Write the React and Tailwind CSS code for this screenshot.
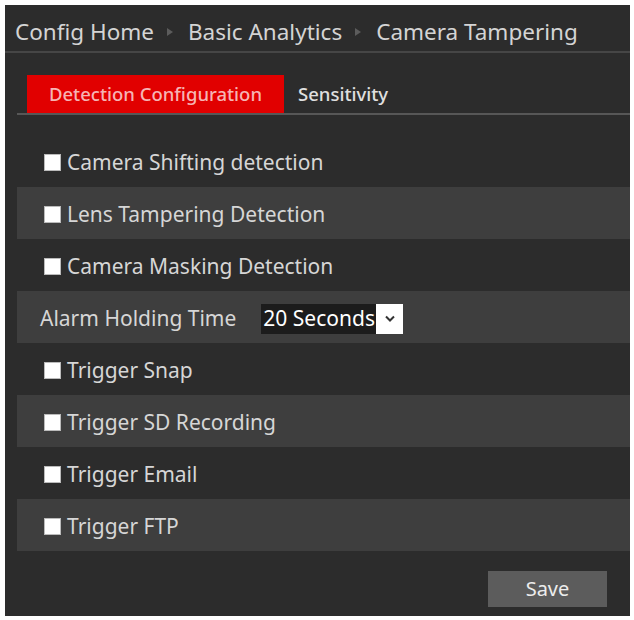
import React, { useState } from "react";

const options = [
  { id: "shift", label: "Camera Shifting detection" },
  { id: "lens", label: "Lens Tampering Detection" },
  { id: "mask", label: "Camera Masking Detection" },
  { id: "alarm", label: "Alarm Holding Time", select: true },
  { id: "snap", label: "Trigger Snap" },
  { id: "sd", label: "Trigger SD Recording" },
  { id: "email", label: "Trigger Email" },
  { id: "ftp", label: "Trigger FTP" },
];

const Arrow = () => (
  <svg width="8" height="10" viewBox="0 0 8 10" className="ml-[12px] mr-[14px]">
    <path d="M1 1 L7 5 L1 9 Z" fill="#5c5c5c" />
  </svg>
);

const App = () => {
  const [tab, setTab] = useState("detection");
  const [checked, setChecked] = useState({});
  const [holding, setHolding] = useState("20");

  const toggle = (id) => setChecked((c) => ({ ...c, [id]: !c[id] }));

  return (
    <div
      className="min-h-screen bg-white pt-[5px] pl-[5px] pr-[4px]"
      style={{ fontFamily: '"Noto Sans", "Open Sans", sans-serif' }}
    >
      <div className="bg-[#2c2c2c] h-[611px] flex flex-col">
        {/* Breadcrumb */}
        <div className="h-[48px] border-b-2 border-[#464646] flex items-center pl-[10px] pt-[8px] text-[22.5px] text-[#d4d4d4]">
          <span>Config Home</span>
          <Arrow />
          <span>Basic Analytics</span>
          <Arrow />
          <span>Camera Tampering</span>
        </div>

        {/* Tabs */}
        <div className="mt-[22px] ml-[12px] border-b-2 border-[#575757] flex pl-[10px] text-[18.5px] font-medium">
          <button
            onClick={() => setTab("detection")}
            className={`h-[38px] w-[257px] ${
              tab === "detection" ? "bg-[#e10000] text-[#f6b4b4]" : "text-[#e0e0e0]"
            }`}
          >
            Detection Configuration
          </button>
          <button
            onClick={() => setTab("sensitivity")}
            className={`h-[38px] px-[14px] ${
              tab === "sensitivity" ? "bg-[#e10000] text-[#f6b4b4]" : "text-[#e0e0e0]"
            }`}
          >
            Sensitivity
          </button>
        </div>

        {/* Options */}
        <div className="mt-[20px] ml-[12px] text-[21px] text-[#d6d6d6]">
          {options.map((opt, i) => (
            <div
              key={opt.id}
              className={`h-[52px] flex items-center pt-[3px] ${i % 2 === 1 ? "bg-[#3e3e3e]" : ""} ${
                opt.select ? "pl-[23px]" : "pl-[27px]"
              }`}
            >
              {opt.select ? (
                <>
                  <span>{opt.label}</span>
                  <div className="ml-[25px] flex items-stretch h-[30px]">
                    <div className="bg-[#1c1c1c] text-white flex items-center pl-[2px] w-[115px] whitespace-nowrap">
                      {holding} Seconds
                    </div>
                    <div className="bg-white w-[27px] flex items-center justify-center">
                      <svg width="10" height="7" viewBox="0 0 10 7">
                        <path d="M1 1.5 L5 5.5 L9 1.5" stroke="#333" strokeWidth="2" fill="none" />
                      </svg>
                    </div>
                  </div>
                </>
              ) : (
                <label className="flex items-center cursor-pointer">
                  <span
                    onClick={() => toggle(opt.id)}
                    className="w-[17px] h-[17px] bg-white border border-[#bbb] mr-[6px] flex items-center justify-center text-[12px] text-black"
                  >
                    {checked[opt.id] ? "✓" : ""}
                  </span>
                  <span>{opt.label}</span>
                </label>
              )}
            </div>
          ))}
        </div>

        {/* Save */}
        <div className="flex justify-end pr-[23px] mt-[20px]">
          <button className="w-[119px] h-[36px] bg-[#5c5c5c] text-[#ececec] text-[20px]">
            Save
          </button>
        </div>
      </div>
    </div>
  );
};

export default App;
